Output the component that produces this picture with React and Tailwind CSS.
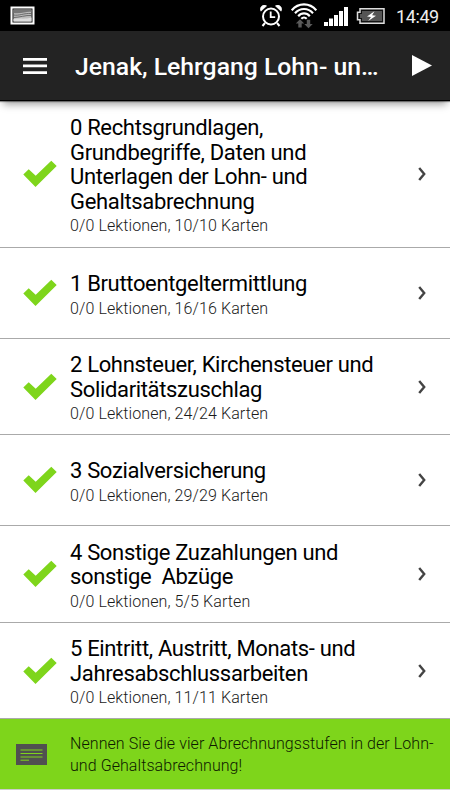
import React from "react";

const lessons = [
  {
    id: 0,
    title: "0 Rechtsgrundlagen,\nGrundbegriffe, Daten und\nUnterlagen der Lohn- und\nGehaltsabrechnung",
    info: "0/0 Lektionen, 10/10 Karten",
    height: "h-[147px]",
  },
  {
    id: 1,
    title: "1 Bruttoentgeltermittlung",
    info: "0/0 Lektionen, 16/16 Karten",
    height: "h-[91px]",
  },
  {
    id: 2,
    title: "2 Lohnsteuer, Kirchensteuer und\nSolidaritätszuschlag",
    info: "0/0 Lektionen, 24/24 Karten",
    height: "h-24",
  },
  {
    id: 3,
    title: "3 Sozialversicherung",
    info: "0/0 Lektionen, 29/29 Karten",
    height: "h-[91px]",
  },
  {
    id: 4,
    title: "4 Sonstige Zuzahlungen und\nsonstige  Abzüge",
    info: "0/0 Lektionen, 5/5 Karten",
    height: "h-[97px]",
  },
  {
    id: 5,
    title: "5 Eintritt, Austritt, Monats- und\nJahresabschlussarbeiten",
    info: "0/0 Lektionen, 11/11 Karten",
    height: "h-24",
  },
];

const StatusBar = () => {
  return (
    <div className="flex h-[31px] items-center justify-between bg-black pl-2.5 pr-[10px] text-white">
      <svg className="h-[19px] w-[25px]" viewBox="0 0 25 19">
        <rect x="0.5" y="0.5" width="24" height="18" fill="#fff" />
        <rect x="2.5" y="2.5" width="20" height="14" fill="#111" />
        <rect x="3.5" y="3.5" width="18" height="12" fill="#bbb" />
        <path d="M3.5 3.5h18v2.5c-5-1-9 2-18 1z" fill="#777" />
        <path d="M3.5 9c6 1 10-2 18-1.5M3.5 11.5c6 0 12-2.5 18-2" stroke="#555" strokeWidth="0.8" fill="none" />
        <path d="M3.5 13c7-1 12 .5 18-1.5v4h-18z" fill="#ddd" />
      </svg>
      <div className="flex items-center">
        <svg className="mr-[9px] h-[22px] w-[22px]" viewBox="0 0 22 22" fill="none" stroke="#fff">
          <circle cx="11" cy="11.5" r="8" strokeWidth="2" />
          <path d="M10.7 6.5v5.7h4.5" strokeWidth="1.8" />
          <path d="M.9 6.2A4 4 0 0 1 6.6 .9zM21.1 6.2A4 4 0 0 0 15.4 .9z" fill="#fff" strokeWidth="0.6" />
          <path d="M5 18l-2.5 3M17 18l2.5 3" strokeWidth="2" />
        </svg>
        <svg className="mr-[7px] h-[26px] w-[26px]" viewBox="0 0 26 26" fill="none" stroke="#fff" strokeWidth="2.1">
          <path d="M.8 7.3C7.2-.6 18.8-.6 25.2 7.3M4 10.3c4.800-5.700 13.200-5.700 18 0M7.200 13.200c3.200-3.800 8.400-3.800 11.600 0M10.300 15.800c1.600-1.700 3.800-1.700 5.400 0" />
          <path d="M9 16.200l4.200 4.200h-2.500v4h-3.400v-4H4.800zM17.500 25.200l4.200-4.200h-2.500v-4.300h-3.400V21h-2.500z" fill="#595959" stroke="none" />
        </svg>
        <svg className="mr-2 h-5 w-6" viewBox="0 0 24 20" fill="#fff">
          <path d="M0 16h4v4H0zM5 12.5h4V20H5zM10 9h4v11h-4zM15 5h4v15h-4zM20 1h4v19h-4z" />
        </svg>
        <svg className="mr-[11px] h-4 w-[29px]" viewBox="0 0 29 16">
          <path d="M4 .8h24v14.4H4v-3.5H1.5V4.3H4z" fill="#111" stroke="#ddd" strokeWidth="1.5" />
          <path d="M6 3h20v10H6v-3H4V6h2z" fill="#555" />
          <path d="M18.5 3.2L11 8.4l4 .6-2.8 4L20 7.7l-3.9-.5z" fill="#fff" />
        </svg>
        <span className="mt-0.5 w-[44px] whitespace-nowrap text-[18px] leading-none tracking-[-0.4px] text-[#eee]">14:49</span>
      </div>
    </div>
  );
};

const Header = () => {
  return (
    <header className="relative z-10 flex h-[70px] items-center border-b border-black bg-[#232323] pl-[23px] pr-[18px] text-white shadow-[0_1px_1px_rgba(0,0,0,0.4),0_6px_8px_-3px_rgba(0,0,0,0.4)]">
      <button type="button" aria-label="Menü">
        <svg className="h-4 w-6" viewBox="0 0 24 16" fill="#fff">
          <path d="M0 0h24v2.700H0zM0 6.600h24v2.700H0zM0 13.200h24V16H0z" />
        </svg>
      </button>
      <h1 className="ml-7 mt-1 flex-1 whitespace-nowrap text-[24.75px] font-medium leading-none">
        Jenak, Lehrgang Lohn- un…
      </h1>
      <button type="button" aria-label="Start">
        <svg className="h-[21px] w-5" viewBox="0 0 20 21" fill="#fff">
          <path d="M0 0l20 10.5L0 21z" />
        </svg>
      </button>
    </header>
  );
};

const LessonRow = ({ lesson }) => {
  return (
    <li className={`flex items-center border-b border-[#aaa] pl-[23px] pr-6 ${lesson.height}`}>
      <svg className="h-7 w-[34px] shrink-0" viewBox="0 0 34 28" fill="#7ed51b">
        <path d="M.3 14.5L5.7 9.2l7 6.5L28.3.7l5.4 5.2L12.5 27z" />
      </svg>
      <div className="ml-[13px] flex-1 pt-[4.5px]">
        <h2 className="whitespace-pre text-[22px] leading-[24.5px] tracking-[-0.34px] text-black">{lesson.title}</h2>
        <p className="mt-0.5 text-[16px] font-light leading-5 tracking-[0.1px] text-[#1a1a1a]">{lesson.info}</p>
      </div>
      <svg className="h-[14px] w-2 shrink-0" viewBox="0 0 8 14" fill="none">
        <path d="M1.2 1l5 6-5 6" stroke="#444" strokeWidth="2.4" />
      </svg>
    </li>
  );
};

const App = () => {
  return (
    <div className="h-[800px] w-[450px] overflow-hidden bg-white font-[Roboto,sans-serif]">
      <StatusBar />
      <Header />
      <ul>
        {lessons.map((lesson) => (
          <LessonRow key={lesson.id} lesson={lesson} />
        ))}
      </ul>
      <div className="flex h-[71px] items-center border-b border-[#ccc] bg-[#7ed51b] pl-4">
        <svg className="h-[21px] w-[31px] shrink-0" viewBox="0 0 31 21">
          <rect width="31" height="21" fill="#505050" />
          <path d="M4.5 6h22M4.5 9.5h22M4.5 13h22M4.5 16.2h8.5" stroke="#7ed51b" strokeWidth="1" />
        </svg>
        <p className="ml-[23px] mt-0.5 whitespace-pre text-[16px] font-light leading-[22px] tracking-[0.07px] text-[#0d1a00]">
          {"Nennen Sie die vier Abrechnungsstufen in der Lohn-\nund Gehaltsabrechnung!"}
        </p>
      </div>
    </div>
  );
};

export default App;
